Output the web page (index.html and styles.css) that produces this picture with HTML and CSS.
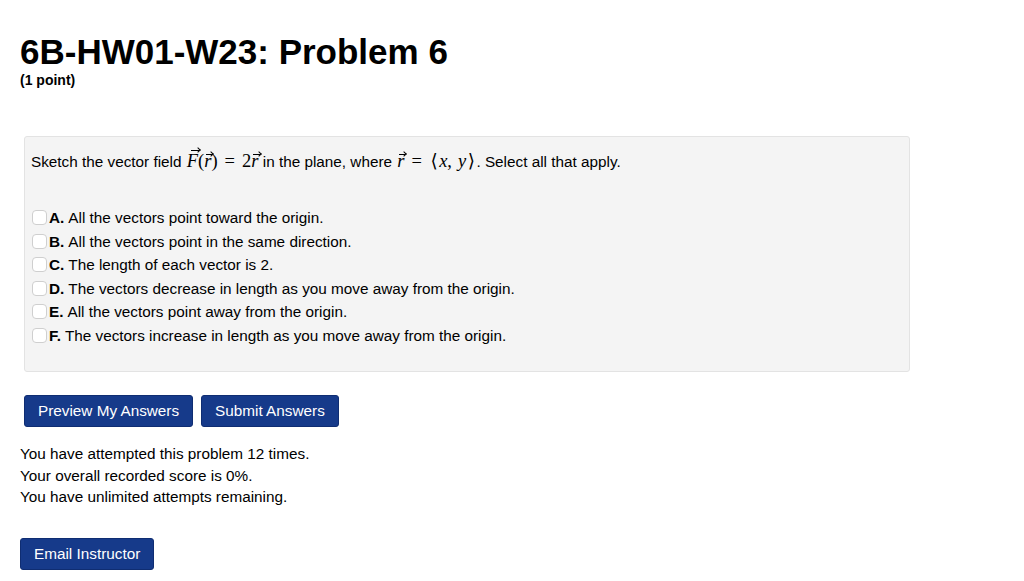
FILE: index.html
```html
<!DOCTYPE html>
<html>
<head>
<meta charset="utf-8">
<link rel="stylesheet" href="styles.css">
</head>
<body>
<div class="page">
  <h1 class="title">6B-HW01-W23: Problem 6</h1>
  <div class="points">(1 point)</div>

  <div class="well">
    <p class="question">Sketch the vector field <span class="math"><span class="vec">F</span>(<span class="vec vr">r</span>)<span class="op">=</span>2<span class="vec vr">r</span></span> in the plane, where <span class="math"><span class="vec vr">r</span><span class="op">=</span><span class="ang">⟨</span><i>x</i>,<span class="thin"></span><i>y</i><span class="ang">⟩</span></span>. Select all that apply.</p>
    <ul class="choices">
      <li><span class="box"></span><b>A.</b> All the vectors point toward the origin.</li>
      <li><span class="box"></span><b>B.</b> All the vectors point in the same direction.</li>
      <li><span class="box"></span><b>C.</b> The length of each vector is 2.</li>
      <li><span class="box"></span><b>D.</b> The vectors decrease in length as you move away from the origin.</li>
      <li><span class="box"></span><b>E.</b> All the vectors point away from the origin.</li>
      <li><span class="box"></span><b>F.</b> The vectors increase in length as you move away from the origin.</li>
    </ul>
  </div>

  <div class="actions">
    <button class="btn">Preview My Answers</button>
    <button class="btn">Submit Answers</button>
  </div>

  <div class="status">
    <div>You have attempted this problem 12 times.</div>
    <div>Your overall recorded score is 0%.</div>
    <div>You have unlimited attempts remaining.</div>
  </div>

  <button class="btn email">Email Instructor</button>
</div>
</body>
</html>
```

FILE: styles.css
```css
html, body {
  margin: 0;
  padding: 0;
  background: #fff;
}
body {
  font-family: "Liberation Sans", Arial, Helvetica, sans-serif;
  color: #000;
}
.page {
  padding: 32px 0 0 20px;
}
.title {
  font-size: 35px;
  font-weight: bold;
  margin: 0;
  line-height: 40px;
}
.points {
  font-size: 14px;
  font-weight: bold;
  margin-top: -1px;
  line-height: 18px;
}
.well {
  margin: 47px 0 0 4px;
  height: 234px;
  background: #f4f4f4;
  border: 1px solid #e3e3e3;
  border-radius: 3px;
  padding: 0 0 0 6px;
  box-sizing: content-box;
  width: 878px;
}
.question {
  font-size: 15.3px;
  margin: 13px 0 0 0;
  line-height: 22px;
}
.math {
  font-family: "Liberation Serif", "DejaVu Serif", serif;
  font-size: 18.5px;
  font-style: normal;
  margin-left: 1px;
}
.math i, .vec {
  font-style: italic;
}
.ang {
  display: inline-block;
  padding: 0 1.5px;
}
.thin {
  display: inline-block;
  width: 6px;
}
.vec {
  position: relative;
  display: inline-block;
}
.vec::before {
  content: "";
  position: absolute;
  left: 4px;
  right: -1px;
  top: 0px;
  height: 1px;
  background: #000;
}
.vec::after {
  content: "";
  position: absolute;
  right: -2px;
  top: -2px;
  width: 3px;
  height: 3px;
  border-top: 1px solid #000;
  border-right: 1px solid #000;
  transform: rotate(45deg);
}
.vec.vr::before {
  top: 4px;
  left: 2px;
  right: -1px;
}
.vec.vr::after {
  top: 2px;
}
.op {
  margin: 0 7px;
}
.choices {
  list-style: none;
  margin: 33px 0 0 0;
  padding: 0;
}
.choices li {
  font-size: 15.3px;
  line-height: 23.5px;
  height: 23.5px;
  display: flex;
  align-items: center;
}
.choices li:first-child {
  margin-top: 1px;
}
.choices b {
  margin-right: 4px;
}
.box {
  width: 15px;
  height: 15px;
  border: 1px solid #cfcfcf;
  border-radius: 4px;
  background: #fff;
  margin-right: 2px;
  flex: none;
  box-sizing: border-box;
  margin-left: 1px;
}
.actions {
  margin: 23px 0 0 4px;
  display: flex;
  gap: 8px;
}
.btn {
  font-family: "Liberation Sans", Arial, Helvetica, sans-serif;
  font-size: 15.3px;
  color: #fff;
  background: #163a8a;
  border: 1px solid #0f2d72;
  border-radius: 3px;
  height: 32px;
  padding: 0 13px;
  cursor: pointer;
}
.status {
  margin-top: 16px;
  font-size: 15.3px;
  line-height: 21.5px;
}
.email {
  margin-top: 30px;
}
```
